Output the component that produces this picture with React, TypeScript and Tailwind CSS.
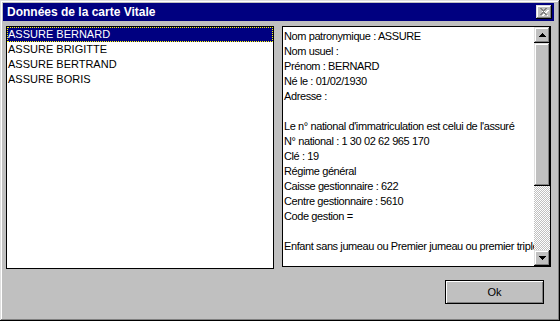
import React from "react";

const raised =
  "shadow-[inset_-1px_-1px_#000,inset_1px_1px_#dfdfdf,inset_-2px_-2px_#808080,inset_2px_2px_#fff]";

function ArrowBtn({ dir }: { dir: "up" | "down" }) {
  return (
    <div className={`w-[16px] h-[16px] bg-[#c0c0c0] flex items-center justify-center ${raised}`}>
      <svg width="7" height="4" viewBox="0 0 7 4" shapeRendering="crispEdges">
        {dir === "up" ? (
          <path d="M3 0h1v1h1v1h1v1h1v1H0V3h1V2h1V1h1z" fill="#000" />
        ) : (
          <path d="M0 0h7v1H6v1H5v1H4v1H3V3H2V2H1V1H0z" fill="#000" />
        )}
      </svg>
    </div>
  );
}

export default function App() {
  const names = ["ASSURE BERNARD", "ASSURE BRIGITTE", "ASSURE BERTRAND", "ASSURE BORIS"];
  const lines = [
    "Nom patronymique : ASSURE",
    "Nom usuel :",
    "Prénom : BERNARD",
    "Né le : 01/02/1930",
    "Adresse :",
    "",
    "Le n° national d'immatriculation est celui de l'assuré",
    "N° national : 1 30 02 62 965 170",
    "Clé : 19",
    "Régime général",
    "Caisse gestionnaire : 622",
    "Centre gestionnaire : 5610",
    "Code gestion =",
    "",
    "Enfant sans jumeau ou Premier jumeau ou premier triplé",
  ];
  return (
    <div
      className="w-[560px] h-[321px] bg-[#c0c0c0] overflow-hidden"
      style={{ fontFamily: '"Liberation Sans", Arial, sans-serif' }}
    >
      <div className={`w-[560px] h-[321px] bg-[#c0c0c0] flex flex-col pt-[3px] pl-[3px] pr-[6px] ${raised}`}>
        {/* Title bar */}
        <div className="h-[18px] bg-[#000080] flex items-center justify-between pl-[4px] pr-[2px] shrink-0">
          <span className="text-white font-bold text-[12px] leading-none">Données de la carte Vitale</span>
          <div className={`w-[16px] h-[14px] bg-[#c0c0c0] flex items-center justify-center ${raised}`}>
            <svg width="9" height="8" viewBox="0 0 9 8" shapeRendering="crispEdges">
              <path d="M1 1h2v1h1v1h1V2h1V1h2v1H7v1H6v1H5v1h1v1h1v1H6V6H5V5H4v1H3v1H1V6h1V5h1V4H2V3H1z" fill="#fff" transform="translate(1,1)" />
              <path d="M0 0h2v1h1v1h1V1h1V0h2v1H6v1H5v1H4v1h1v1h1v1h1v1H5V6H4V5H3v1H2v1H0V6h1V5h1V4h1V3H2V2H1V1H0z" fill="#808080" />
            </svg>
          </div>
        </div>

        {/* Panels */}
        <div className="flex gap-[8px] pt-[5px] pl-[3px] items-start">
          <div className="w-[268px] h-[243px] border border-black bg-white overflow-hidden text-[11px] leading-[15px]">
            {names.map((n, i) =>
              i === 0 ? (
                <div key={n} className="h-[15px] bg-[#000080] text-white border border-dotted border-[#ffff00] leading-[13px] whitespace-nowrap">
                  {n}
                </div>
              ) : (
                <div key={n} className="h-[15px] text-black pl-[1px] whitespace-nowrap">
                  {n}
                </div>
              )
            )}
          </div>

          <div className="w-[269px] h-[241px] border border-black bg-white flex">
            <div className="flex-1 overflow-hidden pl-[1px] pt-[2px] text-[11px] leading-[15px] tracking-[-0.4px] text-black whitespace-nowrap">
              {lines.map((l, i) => (
                <div key={i} className="h-[15px]">
                  {l || "\u00a0"}
                </div>
              ))}
            </div>
            <div className="w-[16px] flex flex-col shrink-0">
              <ArrowBtn dir="up" />
              <div className={`h-[143px] bg-[#c0c0c0] ${raised}`} />
              <div className="flex-1 bg-[conic-gradient(#c0c0c0_25%,#fff_0_50%,#c0c0c0_0_75%,#fff_0)] bg-size-[2px_2px]" />
              <ArrowBtn dir="down" />
            </div>
          </div>
        </div>

        {/* Button row */}
        <div className="flex justify-end pr-[10px] mt-[11px]">
          <div className="w-[99px] h-[24px] border border-black bg-[#c0c0c0] shadow-[inset_1px_1px_#fff,inset_-1px_-1px_#808080] flex items-center justify-center text-[11px] text-black">
            Ok
          </div>
        </div>
      </div>
    </div>
  );
}
